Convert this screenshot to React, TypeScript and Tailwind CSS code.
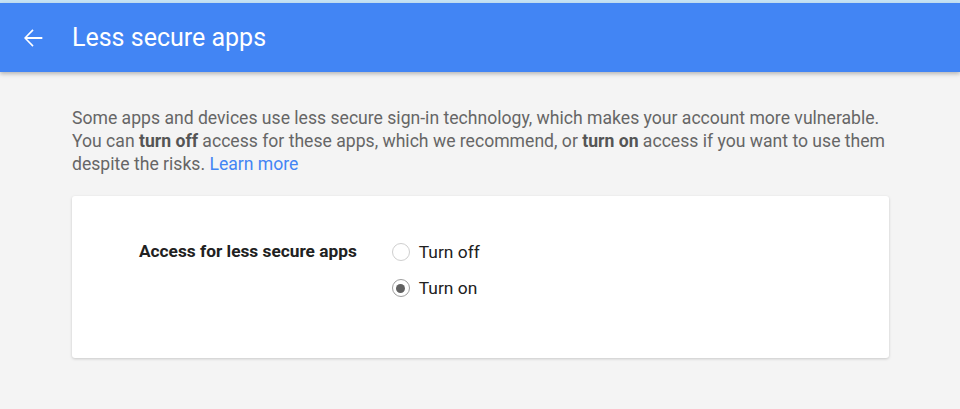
import React from "react";

function Radio({ checked, label }: { checked?: boolean; label: string }) {
  return (
    <label className="flex items-center h-[28px]">
      <span
        className={
          checked
            ? "w-[18px] h-[18px] rounded-full border-[1.5px] border-[#9e9e9e] flex items-center justify-center"
            : "w-[18px] h-[18px] rounded-full border-[1.5px] border-[#cfcfcf]"
        }
      >
        {checked && <span className="w-[9px] h-[9px] rounded-full bg-[#616161]" />}
      </span>
      <span className="ml-[9px] text-[17.4px] text-[#212121]">{label}</span>
    </label>
  );
}

export default function App() {
  return (
    <div
      className="w-[960px] h-[409px] bg-[#f4f4f4] overflow-hidden"
      style={{ fontFamily: "Roboto, 'Noto Sans', sans-serif" }}
    >
      <div className="h-[3px] bg-[#c6e3f5]" />
      <header className="h-[69px] bg-[#4285f4] flex items-center shadow-[0_2px_4px_rgba(0,0,0,0.25)] relative">
        <svg
          width="28"
          height="28"
          viewBox="0 0 24 24"
          className="ml-[19px]"
          fill="#ffffff"
        >
          <path d="M20 11.2H6.9l5.6-5.6-1-1L4.3 12l7.2 7.4 1-1-5.6-5.6H20z" />
        </svg>
        <h1 className="ml-[25px] text-[25px] text-white font-normal">Less secure apps</h1>
      </header>
      <main className="px-[72px] pt-[35px]">
        <p className="text-[17.6px] leading-[23px] text-[#666666] whitespace-nowrap">
          Some apps and devices use less secure sign-in technology, which makes your account more vulnerable.
          <br />
          You can <b className="font-bold text-[#555555]">turn off</b> access for these apps, which we recommend, or{" "}
          <b className="font-bold text-[#555555]">turn on</b> access if you want to use them
          <br />
          despite the risks. <a className="text-[#4285f4]">Learn more</a>
        </p>
        <section className="mt-[20px] w-[817px] h-[162px] bg-white rounded-[3px] shadow-[0_1px_3px_rgba(0,0,0,0.18)] flex pl-[67px] pt-[42px]">
          <div className="h-[28px] flex items-center text-[17.3px] font-bold text-[#212121]">
            Access for less secure apps
          </div>
          <div className="ml-[35px] flex flex-col gap-[8px]">
            <Radio label="Turn off" />
            <Radio label="Turn on" checked />
          </div>
        </section>
      </main>
    </div>
  );
}
